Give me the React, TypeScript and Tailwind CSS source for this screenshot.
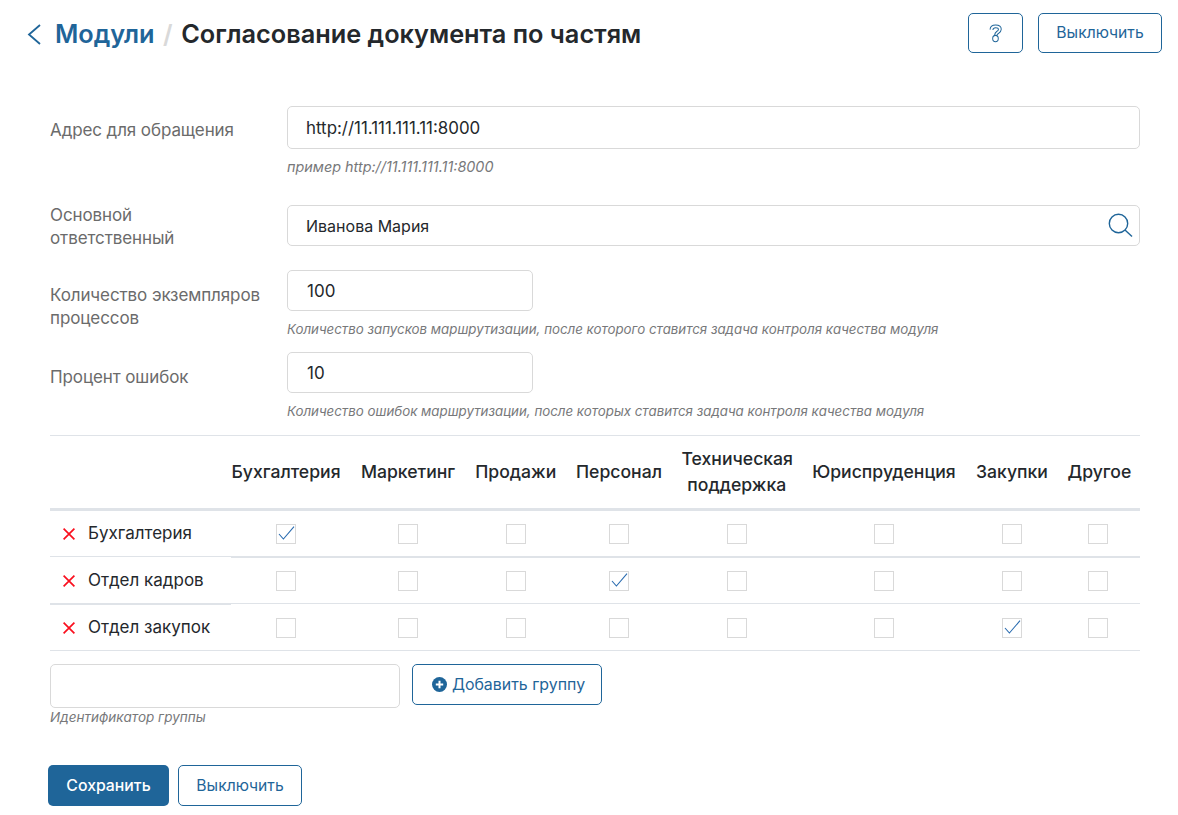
// Module settings page: endpoint fields plus the group / department access matrix.
const departments = [
  "Бухгалтерия",
  "Маркетинг",
  "Продажи",
  "Персонал",
  "Техническая поддержка",
  "Юриспруденция",
  "Закупки",
  "Другое",
];

const groups = [
  {
    name: "Бухгалтерия",
    checked: 0,
    leftBorder: "h-[46px] border-b border-[#dfe3e8]",
    rightBorder: "h-[47px] border-b-2 border-[#dfe3e8]",
  },
  {
    name: "Отдел кадров",
    checked: 3,
    leftBorder: "h-[47px] border-b-2 border-[#dfe3e8]",
    rightBorder: "h-[46px] border-b border-[#dfe3e8]",
  },
  {
    name: "Отдел закупок",
    checked: 6,
    leftBorder: "h-[46px] border-b border-[#dfe3e8]",
    rightBorder: "h-[46px] border-b border-[#dfe3e8]",
  },
];

const gridCols =
  "grid grid-cols-[110px_95px_81.5px_86px_110.5px_145px_72px_61px] gap-x-[19.5px] pr-[10px] items-center";

function Field({
  label,
  hint,
  hintClass,
  children,
  className,
}: {
  label: React.ReactNode;
  hint?: string;
  hintClass?: string;
  children: React.ReactNode;
  className?: string;
}) {
  return (
    <div className={`flex ${className ?? ""}`}>
      <div className="w-[237px] shrink-0 text-[17px] leading-[23px] tracking-[-0.1px] text-[#6b6b6b]">{label}</div>
      <div className="min-w-0 flex-1">
        {children}
        {hint ? (
          <p className={`mt-[9px] leading-[18px] italic text-[#77787a] ${hintClass ?? "text-[13.3px]"}`}>{hint}</p>
        ) : null}
      </div>
    </div>
  );
}

function Checkbox({ checked }: { checked: boolean }) {
  return (
    <span className="flex h-5 w-5 items-center justify-center border border-[#d9d9d9] bg-white">
      {checked ? (
        <svg width="20" height="20" viewBox="0 0 20 20" fill="none" className="shrink-0 text-[#2a6cb0]" stroke="currentColor" strokeWidth="1.1">
          <path d="M3 10l4.4 5L18 2.7" />
        </svg>
      ) : null}
    </span>
  );
}

export default function App() {
  return (
    <div className="h-[815px] w-[1178px] overflow-hidden bg-white font-['Inter',sans-serif] text-[#24282c]">
      <header className="flex h-[53px] items-start justify-between pl-[27px] pr-4 pt-[13px]">
        <div className="flex items-center pt-[1px] text-[25.3px] leading-10 font-semibold">
          <svg width="14" height="21" viewBox="0 0 14 21" fill="none" stroke="#1f6599" strokeWidth="1.8" className="mt-[1px]">
            <path d="M13 1L2 10.5L13 20" />
          </svg>
          <span className="ml-[14px] text-[#1f6599]">Модули</span>
          <span className="mx-[8.5px] text-[#d9d9d9]">/</span>
          <span>Согласование документа по частям</span>
        </div>
        <div className="flex gap-[15px]">
          <button className="flex h-10 w-[55px] items-center justify-center rounded-[5px] border border-[#1f6599] text-[#1f6599]">
            <svg width="14" height="19" viewBox="0 0 16 19" preserveAspectRatio="none" fill="none" stroke="currentColor" strokeWidth="1.1">
              <path d="M1.2 5.6C1.4 2.8 3.8 1 7.6 1c3.8 0 6.4 1.8 6.4 4.3 0 2.2-1.6 3.3-3.2 4.2-.9.5-1.6 1-1.8 2" />
              <path d="M4.4 6C4.6 4.6 5.8 3.8 7.6 3.8c1.9 0 3.2.7 3.2 1.7 0 .9-.8 1.4-2 2.1-1.2.7-2.2 1.5-2.5 3.9" />
              <circle cx="7.4" cy="14.6" r="3.2" />
            </svg>
          </button>
          <button className="h-10 w-[124px] rounded-[5px] border border-[#1f6599] text-[15.7px] text-[#1f6599]">
            Выключить
          </button>
        </div>
      </header>

      <main className="pl-[50px] pr-[38px] pt-[53px]">
        <Field
          label={<span className="block pt-[13px]">Адрес для обращения</span>}
          hint="пример http://11.111.111.11:8000"
          hintClass="text-[14.4px]"
        >
          <input
            readOnly
            value="http://11.111.111.11:8000"
            className="block h-[43px] w-full rounded-[5px] border border-[#d9d9d9] px-[18px] text-[16.9px] text-[#24282c] outline-none"
          />
        </Field>

        <Field
          className="mt-[29px]"
          label={<span className="block w-[150px] -mt-[1px]">Основной ответственный</span>}
        >
          <div className="relative">
            <input
              readOnly
              value="Иванова Мария"
              className="block h-[41px] w-full rounded-[5px] border border-[#d9d9d9] px-[18px] text-[16px] text-[#24282c] outline-none"
            />
            <svg width="26" height="26" viewBox="0 0 26 26" fill="none" stroke="#1f6599" strokeWidth="1.4" className="absolute right-[7px] top-[7px]">
              <circle cx="11.5" cy="11.5" r="9.2" />
              <path d="M18 18l7 6.5" />
            </svg>
          </div>
        </Field>

        <Field
          className="mt-[20px]"
          label={<span className="block pt-[14px]">Количество экземпляров процессов</span>}
          hint="Количество запусков маршрутизации, после которого ставится задача контроля качества модуля"
        >
          <input
            readOnly
            value="100"
            className="block h-[41px] w-[246px] rounded-[5px] border border-[#d9d9d9] px-[19px] text-[17px] text-[#24282c] outline-none"
          />
        </Field>

        <Field
          className="mt-[14px]"
          label={<span className="block pt-[14px]">Процент ошибок</span>}
          hint="Количество ошибок маршрутизации, после которых ставится задача контроля качества модуля"
        >
          <input
            readOnly
            value="10"
            className="block h-[41px] w-[246px] rounded-[5px] border border-[#d9d9d9] px-[19px] text-[17px] text-[#24282c] outline-none"
          />
        </Field>

        <section className="mt-[15px] border-t border-[#dfe3e8]">
          <div className="flex h-[72px]">
            <div className="w-[181px] shrink-0" />
            <div className={`${gridCols} flex-1`}>
              {departments.map((d) => (
                <div key={d} className="text-center text-[17.6px] leading-[26px] font-medium text-[#24282c]">
                  {d}
                </div>
              ))}
            </div>
          </div>
          <div className="h-[3px] bg-[#dfe3e8]" />
          {groups.map((g) => (
            <div key={g.name} className="flex items-start">
              <div className={`flex w-[181px] shrink-0 items-center ${g.leftBorder}`}>
                <svg width="12" height="12" viewBox="0 0 12 12" fill="none" stroke="#fa0f1e" strokeWidth="1.7" className="ml-[13px] mt-[1px]">
                  <path d="M.6.6l10.8 10.8M11.4.6L.6 11.4" />
                </svg>
                <span className="ml-[13px] text-[17px]">{g.name}</span>
              </div>
              <div className={`${gridCols} flex-1 ${g.rightBorder}`}>
                {departments.map((d, i) => (
                  <div key={d} className="flex justify-center">
                    <Checkbox checked={i === g.checked} />
                  </div>
                ))}
              </div>
            </div>
          ))}
        </section>

        <div className="mt-[13px] flex gap-3">
          <div>
            <input className="block h-[44px] w-[350px] rounded-[5px] border border-[#d9d9d9] outline-none" />
            <p className="text-[13.5px] leading-[18px] italic text-[#77787a]">Идентификатор группы</p>
          </div>
          <button className="flex h-[41px] w-[190px] items-center justify-center gap-[5px] rounded-[5px] border border-[#1f6599] pl-[3px] text-[15.9px] text-[#1f6599]">
            <svg width="15" height="15" viewBox="0 0 15 15">
              <circle cx="7.5" cy="7.5" r="7.5" fill="currentColor" />
              <path d="M7.5 3.8v7.4M3.8 7.5h7.4" stroke="white" strokeWidth="2" />
            </svg>
            Добавить группу
          </button>
        </div>

        <div className="-ml-[2px] mt-[39px] flex gap-[9px]">
          <button className="h-[41px] w-[121px] rounded-[5px] bg-[#1f6599] text-[15.8px] font-medium text-white">
            Сохранить
          </button>
          <button className="h-[41px] w-[124px] rounded-[5px] border border-[#1f6599] text-[15.7px] text-[#1f6599]">
            Выключить
          </button>
        </div>
      </main>
    </div>
  );
}
